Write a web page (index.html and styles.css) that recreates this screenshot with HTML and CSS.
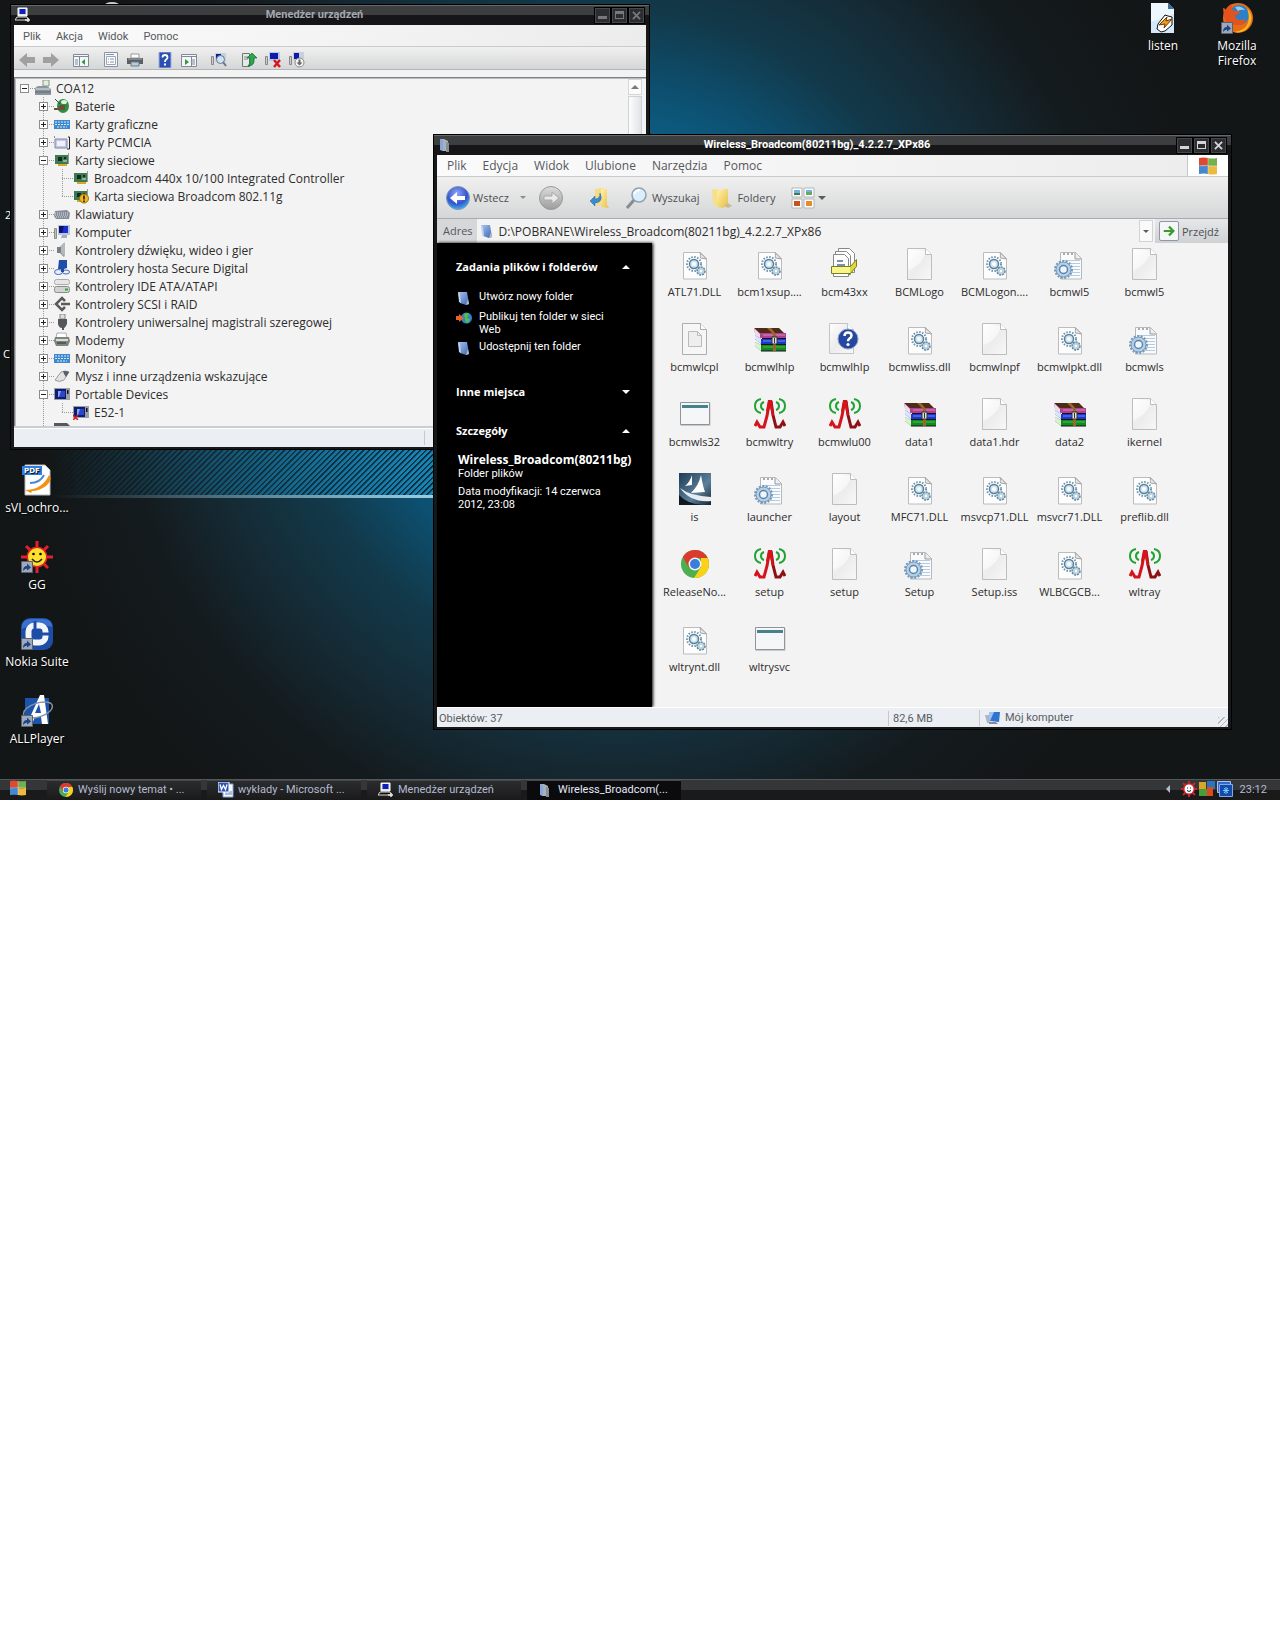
FILE: index.html
```html
<!DOCTYPE html>
<html lang="pl">
<head>
  <meta charset="UTF-8">
  <meta name="viewport" content="width=device-width, initial-scale=1.0">
  <title>Pulpit</title>
  <link rel="stylesheet" href="styles.css">
</head>
<body>

<!-- Icon sprites -->
<svg class="sprites" aria-hidden="true">
  <defs>
    <linearGradient id="gPage" x1="0" y1="0" x2="1" y2="1"><stop offset="0" stop-color="#fff"/><stop offset=".5" stop-color="#ececec"/><stop offset="1" stop-color="#f8f8f8"/></linearGradient>
    <linearGradient id="gFolder" x1="0" y1="0" x2="1" y2="1"><stop offset="0" stop-color="#fff1a8"/><stop offset="1" stop-color="#e8be4a"/></linearGradient>
    <linearGradient id="gNight" x1="0" y1="0" x2="1" y2="1"><stop offset="0" stop-color="#a9c3ee"/><stop offset="1" stop-color="#3b65b5"/></linearGradient>
    <radialGradient id="gBack" cx=".45" cy=".3" r=".75"><stop offset="0" stop-color="#8fa6f2"/><stop offset=".6" stop-color="#3453cf"/><stop offset="1" stop-color="#3fc4ef"/></radialGradient>
    <linearGradient id="gIs" x1="0" y1="0" x2="1" y2="1"><stop offset="0" stop-color="#1d3b55"/><stop offset=".6" stop-color="#5d809b"/><stop offset="1" stop-color="#16222d"/></linearGradient>
    <linearGradient id="gGray" x1="0" y1="0" x2="0" y2="1"><stop offset="0" stop-color="#dcdcdc"/><stop offset="1" stop-color="#9d9d9d"/></linearGradient>
  </defs>

  <!-- file types, 32x32 -->
  <symbol id="page" viewBox="0 0 32 32"><path d="M3.5 .5h18l6 6v25h-24z" fill="url(#gPage)" stroke="#bdbdbd"/><path d="M4 22C14 19 20 12 22 3L4 1z" fill="#fff" opacity=".5"/><path d="M21.500 .5v6h6" fill="#fff" stroke="#bdbdbd"/></symbol>
  <symbol id="dll" viewBox="0 0 32 32"><path d="M4.500 4.500h17l6 6v20.500h-23z" fill="#fdfdfd" stroke="#bcbcbc"/><path d="M21 4.500c1 2 0 4 .5 5.500l6 1z" fill="#e6e6e6" stroke="#a5a5a5"/><circle cx="15" cy="16" r="7" fill="none" stroke="#6b93ac" stroke-width="2" stroke-dasharray="1.500 1.500"/><circle cx="15" cy="16" r="4.500" fill="#cfe4f1" stroke="#557f9c" stroke-width="1.500"/><circle cx="15" cy="16" r="2" fill="#fff"/><circle cx="22" cy="23" r="4" fill="#b9d3e2" stroke="#64879c" stroke-width="1.500" stroke-dasharray="2 1"/><circle cx="22" cy="23" r="1.200" fill="#fff"/></symbol>
  <symbol id="inf" viewBox="0 0 32 32"><path d="M6.500 4.500h15l6 6v20.500h-21z" fill="#fafbfc" stroke="#b5b9bd"/><path d="M9 6h2m2 0h2m2 0h2" stroke="#aaa" stroke-width="2"/><path d="M9 12.500h17m-17 3h17m-17 3h17m-17 3h17m-17 3h17m-17 3h17" stroke="#b5cbe2"/><path d="M21 5v6h6.500" fill="#eee" stroke="#999"/><circle cx="9.500" cy="21.500" r="8.500" fill="none" stroke="#7898b5" stroke-width="2" stroke-dasharray="2 1.500"/><circle cx="9.500" cy="21.500" r="7.500" fill="#b4d0e8" stroke="#6f95b7"/><circle cx="9.500" cy="21.500" r="4" fill="#eef6fb" stroke="#5c84a8" stroke-width="1.500"/></symbol>
  <symbol id="cpl" viewBox="0 0 32 32"><path d="M3.500 .5h18l6 6v25h-24z" fill="#f6f6f6" stroke="#adadad"/><path d="M21.500 .5v6h6" fill="#fff" stroke="#adadad"/><path d="M9.500 8.500h9l4 4v11h-13z" fill="#eee" stroke="#bbb"/><path d="M18.500 8.500v4h4" fill="none" stroke="#bbb"/></symbol>
  <symbol id="stack" viewBox="0 0 32 32"><path d="M9.500 .5h11l5 5v19h-16z" fill="#fff" stroke="#888"/><path d="M6.500 3.500h11l4 4v19h-15z" fill="#fff" stroke="#888"/><path d="M4.500 6.500h11l4 4v18h-15z" fill="#fff" stroke="#888"/><path d="M8 13h6m-6 4h8" stroke="#516d94" stroke-width="1.500"/><path d="M2.500 18.500h19l6-7v7l-6 7h-19z" fill="#d9d93a" stroke="#7d7c20"/><path d="M3 19h18v6H3z" fill="#f6f68a"/></symbol>
  <symbol id="rar" viewBox="0 0 32 32"><path d="M0 5h25l7 7v3H7z" fill="#4e2a18"/><path d="M0 5l6 5h26v5H7L1 10z" fill="#b0408e"/><path d="M0 5l6 6v4L1 10z" fill="#e8e0e6"/><path d="M1 12l6 4h25v5H7l-6-5z" fill="#1c38c8"/><path d="M1 12l6 4v5l-6-5z" fill="#dfe4f8"/><path d="M1 19l6 3h25v6H7l-6-5z" fill="#128a1d"/><path d="M1 19l6 3v6l-6-5z" fill="#d9f0d5"/><path d="M8 15.500h24M7 21.500h25M7 28h25" stroke="#170f24"/><path d="M9 12h22" stroke="#d98abf"/><path d="M9 18h22" stroke="#6f8df2"/><path d="M9 24h22" stroke="#4cc24c"/><path d="M13 5h4l5 6v17h-3V11z" fill="#96682a"/><path d="M18 14h5v7h-5z" fill="#ddd" stroke="#333"/><path d="M20.500 15v5" stroke="#333"/></symbol>
  <symbol id="help" viewBox="0 0 32 32"><path d="M.5 .5h18l6 6v24h-24z" fill="url(#gPage)" stroke="#c4c4c4"/><path d="M18.500 .5v6h6" fill="#fff" stroke="#c4c4c4"/><circle cx="19" cy="16" r="10" fill="#26479f" stroke="#8b9cc9"/><path d="M15.500 13q0-3.500 3.500-3.500t3.500 3q0 2-2.200 3.200-1.300.8-1.300 2.500" fill="none" stroke="#fff" stroke-width="2.500"/><circle cx="19" cy="21.500" r="1.600" fill="#fff"/></symbol>
  <symbol id="exe" viewBox="0 0 32 32"><path d="M1.500 5h30v23h-30z" fill="#c9c9c9"/><path d="M1.500 4.500h29v22h-29z" fill="#f4f6f7" stroke="#8e9499"/><path d="M3 7h26v3H3z" fill="#47818c"/></symbol>
  <symbol id="wifi" viewBox="0 0 32 32"><path d="M17 3l2 14 3 12 4 0 3-5 2 4" fill="none" stroke="#8e1014" stroke-width="3"/><path d="M1 28l2-4 3 5h4l3-11L15.500 4" fill="none" stroke="#d4141c" stroke-width="3"/><path d="M14 2h4l2 15-2 1-2-9-2 6-2-2z" fill="#d4141c"/><path d="M7 1Q1 2 1 8t6 7M25 1q6 1 6 7t-6 7M10 4Q7 5 7 8t3 4M22 4q3 1 3 4t-3 4" fill="none" stroke="#21a233" stroke-width="2"/></symbol>
  <symbol id="sail" viewBox="0 0 32 32"><path d="M0 0h32v32H0z" fill="url(#gIs)"/><path d="M13 2v10l-7 1q5-4 7-11zM22 2q2 12 4 17l-14 1Q20 12 22 2z" fill="#fff"/><path d="M1 15q10 8 31 9v4Q12 30 1 15z" fill="#e6edf2"/><path d="M0 22q8 9 24 10H0z" fill="#101820"/></symbol>
  <symbol id="chrome" viewBox="0 0 32 32"><circle cx="16" cy="16" r="14" fill="#4caf50"/><path d="M3.900 9A14 14 0 0 1 28.600 10H16L9.500 19z" fill="#db3b2e"/><path d="M28.600 10A14 14 0 0 1 15 30l7-11 0-9z" fill="#fcd116"/><circle cx="16" cy="16" r="6.500" fill="#f3f3f3"/><circle cx="16" cy="16" r="5" fill="#3b7ddb"/></symbol>

  <!-- desktop, 32x32 -->
  <symbol id="link" viewBox="0 0 12 12"><path d="M.5 .5h11v11H.5z" fill="#9fa9bb" stroke="#5b616e"/><path d="M2 10q0-5 4-5V2.500l4 4-4 3V7.500Q4 7.500 2 10z" fill="#1b4684"/></symbol>
  <symbol id="listen" viewBox="0 0 32 32"><path d="M4 1h17l6 6v24H4z" fill="#d5e8f9"/><path d="M4 1h17v6h6v5L4 20z" fill="#eff7fe"/><path d="M21 1l6 6h-6z" fill="#3c6fa8"/><path d="M11 22l7-9 3 1 4 1v8l-7 6-4 1-4-3z" fill="#fff" stroke="#111"/><path d="M12 23l8-8-1 4 6-2-8 9 1-4z" fill="#f39a17" stroke="#6d3b00"/></symbol>
  <symbol id="firefox" viewBox="0 0 32 32"><circle cx="17" cy="16" r="15" fill="#e86c13"/><circle cx="18" cy="13" r="10" fill="#2c7fc9"/><path d="M14 5q6-2 10 3-5-1-7 1z" fill="#8ed0f2"/><path d="M2 6q2 0 3 2 2-5 6-6-1 5 2 7l6 0q0 4-5 4 0 5 5 5t5-2q1 6-6 7Q5 24 3 15z" fill="#e5531c"/><path d="M26 6q8 9 2 18-5 8-15 6 11-1 14-9 2-7-1-15z" fill="#fbb825"/></symbol>
  <symbol id="pdf" viewBox="0 0 32 32"><path d="M4 1h20l5 5v25H4z" fill="#fff" stroke="#b9b9b9"/><path d="M1 2h20v9H1z" fill="#2f7de0"/><path d="M9 19q10 0 14-8" fill="none" stroke="#4c86d6" stroke-width="2"/><path d="M4 26q17 0 24-15 4 5-3 11-7 5-14 5l-1 2z" fill="#f2920f"/></symbol>
  <symbol id="sun" viewBox="0 0 32 32"><path d="M16 0v32M0 16h32M5 5l22 22M27 5L5 27" stroke="#e1202b" stroke-width="3"/><circle cx="16" cy="16" r="10.500" fill="#e1202b"/><circle cx="16" cy="16" r="9" fill="#ffe12b"/><circle cx="12.500" cy="13" r="1.300"/><circle cx="19.500" cy="13" r="1.300"/><path d="M11 18q5 6 10 0" fill="none" stroke="#222" stroke-width="1.500"/></symbol>
  <symbol id="nokia" viewBox="0 0 32 32"><rect width="32" height="32" rx="9" fill="#1d4da6"/><path d="M1 9q0-8 9-8h12q9 0 9 8-15-6-30 2z" fill="#3a71cc"/><rect x="7.500" y="7.500" width="17" height="17" rx="6" fill="none" stroke="#f2f6fb" stroke-width="6"/><path d="M14 3v8M21 16h8" stroke="#1d4da6" stroke-width="3"/></symbol>
  <symbol id="allplayer" viewBox="0 0 32 32"><path d="M4 3h24v26H4z" fill="#1b55ab"/><path d="M19 0h4l4 29h-6l-1-7h-6l-3 7H6zm-1 9l-4 9h6z" fill="#fff"/><ellipse cx="17" cy="15" rx="15" ry="7" fill="none" stroke="#8391a3" stroke-width="1.500" transform="rotate(-18 17 15)"/></symbol>

  <!-- small icons, 16x16 -->
  <symbol id="pc" viewBox="0 0 16 16"><path d="M3 1h9v8H3z" fill="#e8e4da" stroke="#fff"/><path d="M4.500 2h6v5h-6z" fill="#0a1fc4"/><path d="M2 10h10l2 3H0z" fill="#111" stroke="#ddd"/><path d="M10 13h5m-2-2v4" stroke="#e5e5e5" stroke-width="1.500"/></symbol>
  <symbol id="nfolder" viewBox="0 0 16 16"><path d="M2 2l9 0 2 12-3 1-6-2z" fill="url(#gNight)"/><path d="M2 2l2 2 1 9-2-1z" fill="#c5d4ee"/><path d="M10 15l3-1-1-5z" fill="#b9bec6"/></symbol>
  <symbol id="gfolder" viewBox="0 0 16 16"><path d="M2 2l4 0 4 2v10H4z" fill="#a8b0b8"/><path d="M2 2l3 1v11l-3-1z" fill="#86a5dc"/><path d="M8 5l3 1v9H8z" fill="#858f98"/></symbol>
  <symbol id="arrl" viewBox="0 0 16 16"><path d="M0 8l8-7v4h8v6H8v4z" fill="#a0a0a0"/></symbol>
  <symbol id="arrr" viewBox="0 0 16 16"><path d="M16 8L8 1v4H0v6h8v4z" fill="#a0a0a0"/></symbol>
  <symbol id="pane-l" viewBox="0 0 16 16"><path d="M.5 2.500h15v12H.5z" fill="#f3f6fa" stroke="#818b98"/><path d="M1 4.500h14M6.500 5v9M2 8h3m-3 2h3m-3 2h3" stroke="#818b98"/><path d="M12 7v6L8.500 10z" fill="#37963a"/></symbol>
  <symbol id="pane-r" viewBox="0 0 16 16"><path d="M.5 2.500h15v12H.5z" fill="#f3f6fa" stroke="#818b98"/><path d="M1 4.500h14M10.500 5v9M11 8h3m-3 2h3m-3 2h3" stroke="#818b98"/><path d="M4 7v6l4-3z" fill="#37963a"/></symbol>
  <symbol id="props" viewBox="0 0 16 16"><path d="M1.500 .5h13v14h-13z" fill="#f6f8fb" stroke="#8a94a2"/><path d="M3.500 4.500h9v8h-9z" fill="#fff" stroke="#9aa6b6"/><path d="M5 7h1m1 0h4m-6 3h1m1 0h4M3 2.500h8" stroke="#8295aa"/></symbol>
  <symbol id="printer" viewBox="0 0 16 16"><path d="M4 2h8v4H4z" fill="#fff" stroke="#999"/><path d="M0 6h16v6H0z" fill="#5b5e63"/><path d="M1 7h14" stroke="#aaa"/><path d="M4 10h8v4H4z" fill="#a7d3ec" stroke="#777"/></symbol>
  <symbol id="hlp" viewBox="0 0 16 16"><path d="M2 0h12v16H2z" fill="#2c4fb0" stroke="#9db1de"/><path d="M5.500 5.500q0-2.500 2.500-2.500t2.500 2.500q0 1.300-1.300 2.100T8 10" fill="none" stroke="#fff" stroke-width="1.800"/><path d="M7 11.500h2v2H7z" fill="#fff"/></symbol>
  <symbol id="scan" viewBox="0 0 16 16"><path d="M.5 4.500h2v8h-2z" fill="#c9cdd2" stroke="#888"/><path d="M4 1h11v9H4z" fill="#c7cfdb"/><path d="M5 2h5v5H5z" fill="#0b1cab"/><circle cx="9.500" cy="7.500" r="4" fill="#cfe3f6" stroke="#66788c"/><path d="M12 10l3 4" stroke="#66788c" stroke-width="2"/></symbol>
  <symbol id="upd" viewBox="0 0 16 16"><path d="M1.500 1.500h7v13h-7z" fill="#e5e9e6" stroke="#6c7b71"/><path d="M3 5h4M3 7h4" stroke="#888"/><path d="M11 1l5 5h-3q1 8-6 8 3-2 2-8H6z" fill="#2aa84e" stroke="#14632b" stroke-width=".7"/></symbol>
  <symbol id="unin" viewBox="0 0 16 16"><path d="M.5 4.500h2v8h-2z" fill="#c9cdd2" stroke="#888"/><path d="M4 0h11v9H4z" fill="#b8c8e6"/><path d="M5 1h8v6H5z" fill="#0b1cab"/><path d="M9 8l6 7m0-7l-6 7" stroke="#d41820" stroke-width="2.500"/></symbol>
  <symbol id="dis" viewBox="0 0 16 16"><path d="M.5 4.500h2v8h-2z" fill="#c9cdd2" stroke="#888"/><path d="M4 0h11v9H4z" fill="#c9d0da"/><path d="M5 1h5v6H5z" fill="#0b1cab"/><circle cx="10.500" cy="10.500" r="4.500" fill="#f6f6f6" stroke="#888"/><path d="M9.500 7.500h2v3h2l-3 3-3-3h2z" fill="#666"/></symbol>

  <symbol id="root" viewBox="0 0 16 16"><path d="M8 0h6v6H8z" fill="#e4ebe0" stroke="#87967f"/><path d="M0 9q1-3 4-3h8l4 3v6H0z" fill="#8b969c"/><path d="M1 9h14" stroke="#dfe5e8"/><path d="M0 12h16" stroke="#5d686e"/></symbol>
  <symbol id="batt" viewBox="0 0 16 16"><ellipse cx="9" cy="8" rx="6" ry="7" fill="#2d8f43"/><ellipse cx="10" cy="4" rx="3" ry="2" fill="#dff2df"/><path d="M1 1l5 5" stroke="#444"/><path d="M0 10h4l2-3h5v5H6l-2 0H0z" fill="#6b5038"/></symbol>
  <symbol id="kb" viewBox="0 0 16 16"><path d="M0 4h16v9H0z" fill="#3e88cc"/><path d="M1 6h14M1 8.500h14M3 11h10" stroke="#d5e9fa" stroke-dasharray="2 1"/></symbol>
  <symbol id="pcmcia" viewBox="0 0 16 16"><path d="M1 5h12v9H1z" fill="#c5c9e2" stroke="#8187aa"/><path d="M3 7h8v5H3z" fill="#eef0fa"/><path d="M0 3h1m13 0h1.500v12H13" fill="none" stroke="#222"/></symbol>
  <symbol id="card" viewBox="0 0 16 16"><path d="M1 3h13v9H1z" fill="#3d7a54"/><path d="M4 5h4v4H4zM10 5h2v2h-2z" fill="#152a1c"/><path d="M9 8h4v2H9z" fill="#8ab695"/><path d="M4 12h9v2H4z" fill="#d6a626"/><path d="M14.500 1v11" stroke="#999"/></symbol>
  <symbol id="cardw" viewBox="0 0 16 16"><use href="#card"/><circle cx="11" cy="10.500" r="4.500" fill="#f0b81c" stroke="#96690b"/><path d="M11 7.500v4m0 1v1.500" stroke="#111" stroke-width="1.500"/></symbol>
  <symbol id="keys" viewBox="0 0 16 16"><path d="M1 5l12-1 3 3-1 6H2l-2-3z" fill="#858c99"/><path d="M1 7h13M1 9h14M2 11h12" stroke="#dce0e8" stroke-dasharray="1 1"/></symbol>
  <symbol id="comp" viewBox="0 0 16 16"><path d="M.5 4.500h2v10h-2z" fill="#b9c0b8" stroke="#89918a"/><path d="M4 1h12v10H4z" fill="#b8c5e0"/><path d="M5 2h9v7H5z" fill="#1a2fc9"/><path d="M5 2h5L8 9H5z" fill="#0a1270"/><path d="M8 11h5v3H7z" fill="#aab"/></symbol>
  <symbol id="sound" viewBox="0 0 16 16"><path d="M3 5h3l4-4v14l-4-4H3z" fill="#7a7f83"/><path d="M7 4l4-4v15L7 11z" fill="#b5b9bc"/></symbol>
  <symbol id="sd" viewBox="0 0 16 16"><ellipse cx="4.500" cy="12" rx="4" ry="2.500" fill="#eef" stroke="#3b68bb"/><ellipse cx="12" cy="12" rx="3.500" ry="2" fill="#eef" stroke="#3b68bb"/><path d="M5 0h8v8l-3 1v3H7V9H4z" fill="#1f4da8"/></symbol>
  <symbol id="ide" viewBox="0 0 16 16"><rect x=".5" y="1.500" width="15" height="5" rx="2" fill="#e6e6e6" stroke="#aaa"/><rect x=".5" y="8.500" width="15" height="6" rx="2" fill="#d0d3d0" stroke="#8b8b8b"/><path d="M11 11.500h3" stroke="#3aa03a" stroke-width="2"/></symbol>
  <symbol id="scsi" viewBox="0 0 16 16"><path d="M11 5L8 2 2 8l6 6 3-3M7 8h9" fill="none" stroke="#5a5a5a" stroke-width="2.500"/></symbol>
  <symbol id="usb" viewBox="0 0 16 16"><path d="M6 0h5v5H6z" fill="#ddd" stroke="#888"/><path d="M4 5h9v5q-2 4-3 4v2H8v-2q-3 0-4-4z" fill="#55585b"/></symbol>
  <symbol id="modem" viewBox="0 0 16 16"><path d="M3 1h9l1 5H2z" fill="#fff" stroke="#aaa"/><path d="M1 5h14l1 4-2 5H2l-2-5z" fill="#7d857e"/><path d="M2 8h12" stroke="#d5ddd5" stroke-width="2"/><path d="M3 11h9" stroke="#333"/></symbol>
  <symbol id="mouse" viewBox="0 0 16 16"><path d="M1 12l6-8q5-2 8 0l-5 8q-5 3-9 0z" fill="#e0e2e4" stroke="#9a9da0"/><path d="M9 3q5 0 6 1l-3 5-2-3z" fill="#55606a"/></symbol>
  <symbol id="port" viewBox="0 0 16 16"><path d="M0 2h16v12H0z" fill="#9aa0a8"/><path d="M1 3h11v10H1z" fill="#101d6e"/><path d="M4 5h7v6H4z" fill="#2846d0"/><path d="M4 5h3l-2 6H4z" fill="#8aa2f0"/><path d="M13 4h1.500v4H13z" fill="#111"/></symbol>
  <symbol id="portx" viewBox="0 0 16 16"><use href="#port"/><path d="M0 11l5 5m0-5l-5 5" stroke="#d41820" stroke-width="1.500"/></symbol>
  <symbol id="chip" viewBox="0 0 16 16"><path d="M0 1h13l3 3v11H0z" fill="#55595c"/></symbol>

  <!-- explorer toolbar -->
  <symbol id="back" viewBox="0 0 24 24"><circle cx="12" cy="12" r="11.500" fill="url(#gBack)" stroke="#7c98b6"/><path d="M4 12l7-6v4h8v4h-8v4z" fill="#fff"/></symbol>
  <symbol id="fwd" viewBox="0 0 24 24"><circle cx="12" cy="12" r="11.500" fill="url(#gGray)" stroke="#9a9a9a"/><path d="M20 12l-7-6v4H5v4h8v4z" fill="#e9e9e9" stroke="#aaa"/></symbol>
  <symbol id="up" viewBox="0 0 24 24"><path d="M6 3l8-1v17l-4 1-4-3z" fill="#f7dc80"/><path d="M12 3l6 0v16l2 3-8-1z" fill="url(#gFolder)"/><path d="M1 15l5-5v3q5 0 5-6 4 9-5 10v3z" fill="#3b8bd0" stroke="#2468a5" stroke-width=".5"/></symbol>
  <symbol id="find" viewBox="0 0 24 24"><path d="M9 14L2 22" stroke="#868b90" stroke-width="3"/><circle cx="14" cy="9" r="7" fill="#dbeefb" stroke="#8fa1b0" stroke-width="1.500"/><path d="M9 8q2-4 6-4" fill="none" stroke="#fff" stroke-width="2"/></symbol>
  <symbol id="dirs" viewBox="0 0 24 24"><path d="M2 3l8 1v18l-7-4z" fill="#f7e08a"/><path d="M7 5l5-1V3h6v15l-5 4-6-1z" fill="url(#gFolder)"/><path d="M14 20l4-3 4 3-4 2z" fill="#c9bb8c"/></symbol>
  <symbol id="views" viewBox="0 0 24 24"><path d="M1 2h10v9H1zM13 2h10v9H13zM1 13h10v9H1zM13 13h10v9H13z" fill="#fff" stroke="#b5b5b5"/><path d="M3 4h6v3H3z" fill="#6db4e4"/><path d="M3 7h6v2H3z" fill="#3b7b4a"/><path d="M15 4h6v5H15z" fill="#62a86b"/><path d="M15 4h6v2H15z" fill="#6db4e4"/><path d="M3 15h6v5H3z" fill="#c9531b"/><path d="M15 15h6v5H15z" fill="#e58a2e"/></symbol>
  <symbol id="go" viewBox="0 0 16 16"><path d="M2 8h10M8 3l5 5-5 5" fill="none" stroke="#3a9a2c" stroke-width="2.500"/></symbol>
  <symbol id="flag" viewBox="0 0 18 18"><path d="M0 1q4-1 9 0v8q-4-1-9 0z" fill="#dd4a31"/><path d="M9 1q4 1 9 0v8q-5 1-9 0z" fill="#74b04e"/><path d="M0 9q4-1 9 0v8q-4-1-9 0z" fill="#4688cf"/><path d="M9 9q4 1 9 0v8q-5 1-9 0z" fill="#f0b93e"/><path d="M9 1v16M0 9q9-1 18 0" fill="none" stroke="#fff" stroke-width=".7" opacity=".5"/></symbol>
  <symbol id="globe" viewBox="0 0 16 16"><circle cx="10.500" cy="8" r="5.500" fill="#2a86c8"/><path d="M8 4q4-2 5 0l-2 4 3 1-2 4q-3 0-3-4z" fill="#5cba4a"/><path d="M0 6h3V4l5 4-5 4v-2H0z" fill="#e8632a"/></symbol>
  <symbol id="mycomp" viewBox="0 0 16 16"><path d="M4 2l11 0-1 10-9-1z" fill="#2f74d2"/><path d="M4 2l5 0L5 11l-1 0z" fill="#9fc2f1"/><path d="M0 5h4l1 8H2z" fill="#aab6c6"/><path d="M4 12h7l2 2H4z" fill="#889"/></symbol>
  <symbol id="word" viewBox="0 0 16 16"><path d="M5 2h10v13H5z" fill="#f4f7fd" stroke="#87a2d4"/><path d="M7 10h7m-7 2h7" stroke="#5d7fc0"/><path d="M0 0h11v10H0z" fill="#2a56b0" stroke="#fff"/><path d="M2 2.500l1.500 5 2-4 2 4 1.500-5" fill="none" stroke="#fff" stroke-width="1.300"/></symbol>
  <symbol id="tsun" viewBox="0 0 16 16"><path d="M8 0v16M0 8h16M2 2l12 12M14 2L2 14" stroke="#c9242c" stroke-width="2"/><circle cx="8" cy="8" r="6" fill="#c9242c"/><circle cx="8" cy="8" r="4.500" fill="#fff"/><path d="M6 7h1m2 0h1M6 9.500q2 2 4 0" fill="none" stroke="#222"/></symbol>
  <symbol id="tblocks" viewBox="0 0 16 16"><path d="M0 1h7v7H0z" fill="#d8a72a"/><path d="M8 0h8v8H8z" fill="#2676c2"/><path d="M0 8h8v7H0z" fill="#4a9b3c"/><path d="M8 6h6v9H8z" fill="#dd4a1e"/></symbol>
  <symbol id="tnet" viewBox="0 0 16 16"><path d="M.5 .5h13v11H.5z" fill="#3468cf" stroke="#a9c4f2"/><path d="M2.500 3.500h13v12h-13z" fill="#124aa8" stroke="#7fa8ea"/><path d="M9 6v7M6 9.500h6M7 7l4 5m0-5l-4 5" stroke="#7fc4ff"/></symbol>
</svg>

<div class="desktop">
  <div class="workspace">
    <div class="band"></div>
    <div class="peek"></div>
    <span class="stray stray-a">2</span>
    <span class="stray stray-b">C</span>

    <!-- Shortcuts on the wallpaper -->
    <nav class="shortcuts left">
      <a href="#"><svg><use href="#pdf"/><text x="3" y="9" class="pdf-text">PDF</text></svg>sVI_ochro...</a>
      <a href="#"><svg><use href="#sun"/><use href="#link" y="20" width="12" height="12"/></svg>GG</a>
      <a href="#"><svg><use href="#nokia"/><use href="#link" y="20" width="12" height="12"/></svg>Nokia Suite</a>
      <a href="#"><svg><use href="#allplayer"/><use href="#link" y="20" width="12" height="12"/></svg>ALLPlayer</a>
    </nav>
    <nav class="shortcuts right">
      <a href="#"><svg><use href="#listen"/></svg>listen</a>
      <a href="#"><svg><use href="#firefox"/><use href="#link" y="20" width="12" height="12"/></svg>Mozilla Firefox</a>
    </nav>

    <!-- Device manager -->
    <section class="window devices">
      <header class="titlebar">
        <svg class="ico"><use href="#pc"/></svg>
        <h2>Menedżer urządzeń</h2>
        <div class="controls">
          <button aria-label="Minimalizuj"><i class="min"></i></button>
          <button aria-label="Maksymalizuj"><i class="max"></i></button>
          <button aria-label="Zamknij"><svg viewBox="0 0 10 10"><path d="M1 1l8 8M9 1L1 9"/></svg></button>
        </div>
      </header>
      <div class="menubar">
        <button>Plik</button><button>Akcja</button><button>Widok</button><button>Pomoc</button>
      </div>
      <div class="toolbar">
        <button aria-label="Wstecz"><svg class="ico"><use href="#arrl"/></svg></button>
        <button aria-label="Dalej"><svg class="ico"><use href="#arrr"/></svg></button>
        <button class="split" aria-label="Drzewo konsoli"><svg class="ico"><use href="#pane-l"/></svg></button>
        <button class="split" aria-label="Właściwości"><svg class="ico"><use href="#props"/></svg></button>
        <button aria-label="Drukuj"><svg class="ico"><use href="#printer"/></svg></button>
        <button class="split" aria-label="Pomoc"><svg class="ico"><use href="#hlp"/></svg></button>
        <button aria-label="Okienko akcji"><svg class="ico"><use href="#pane-r"/></svg></button>
        <button class="split" aria-label="Skanuj"><svg class="ico"><use href="#scan"/></svg></button>
        <button class="split" aria-label="Aktualizuj"><svg class="ico"><use href="#upd"/></svg></button>
        <button aria-label="Odinstaluj"><svg class="ico"><use href="#unin"/></svg></button>
        <button aria-label="Wyłącz"><svg class="ico"><use href="#dis"/></svg></button>
      </div>
      <div class="tree-pane">
        <ul class="tree">
          <li>
            <div class="row"><i class="box open"></i><svg class="ico"><use href="#root"/></svg>COA12</div>
            <ul class="branch">
              <li class="row"><i class="box"></i><svg class="ico"><use href="#batt"/></svg>Baterie</li>
              <li class="row"><i class="box"></i><svg class="ico"><use href="#kb"/></svg>Karty graficzne</li>
              <li class="row"><i class="box"></i><svg class="ico"><use href="#pcmcia"/></svg>Karty PCMCIA</li>
              <li>
                <div class="row"><i class="box open"></i><svg class="ico"><use href="#card"/></svg>Karty sieciowe</div>
                <ul class="leaves">
                  <li class="row"><i class="twig"></i><svg class="ico"><use href="#card"/></svg>Broadcom 440x 10/100 Integrated Controller</li>
                  <li class="row"><i class="twig"></i><svg class="ico"><use href="#cardw"/></svg>Karta sieciowa Broadcom 802.11g</li>
                </ul>
              </li>
              <li class="row"><i class="box"></i><svg class="ico"><use href="#keys"/></svg>Klawiatury</li>
              <li class="row"><i class="box"></i><svg class="ico"><use href="#comp"/></svg>Komputer</li>
              <li class="row"><i class="box"></i><svg class="ico"><use href="#sound"/></svg>Kontrolery dźwięku, wideo i gier</li>
              <li class="row"><i class="box"></i><svg class="ico"><use href="#sd"/></svg>Kontrolery hosta Secure Digital</li>
              <li class="row"><i class="box"></i><svg class="ico"><use href="#ide"/></svg>Kontrolery IDE ATA/ATAPI</li>
              <li class="row"><i class="box"></i><svg class="ico"><use href="#scsi"/></svg>Kontrolery SCSI i RAID</li>
              <li class="row"><i class="box"></i><svg class="ico"><use href="#usb"/></svg>Kontrolery uniwersalnej magistrali szeregowej</li>
              <li class="row"><i class="box"></i><svg class="ico"><use href="#modem"/></svg>Modemy</li>
              <li class="row"><i class="box"></i><svg class="ico"><use href="#kb"/></svg>Monitory</li>
              <li class="row"><i class="box"></i><svg class="ico"><use href="#mouse"/></svg>Mysz i inne urządzenia wskazujące</li>
              <li>
                <div class="row"><i class="box open"></i><svg class="ico"><use href="#port"/></svg>Portable Devices</div>
                <ul class="leaves">
                  <li class="row"><i class="twig"></i><svg class="ico"><use href="#portx"/></svg>E52-1</li>
                </ul>
              </li>
              <li class="row"><i class="gap"></i><svg class="ico"><use href="#chip"/></svg></li>
            </ul>
          </li>
        </ul>
        <div class="scrollbar"><button aria-label="W górę"><i class="tri up"></i></button><i class="thumb"></i></div>
      </div>
      <footer class="statusbar"><span></span></footer>
    </section>

    <!-- Explorer -->
    <section class="window explorer">
      <header class="titlebar">
        <svg class="ico"><use href="#gfolder"/></svg>
        <h2>Wireless_Broadcom(80211bg)_4.2.2.7_XPx86</h2>
        <div class="controls">
          <button aria-label="Minimalizuj"><i class="min"></i></button>
          <button aria-label="Maksymalizuj"><i class="max"></i></button>
          <button aria-label="Zamknij"><svg viewBox="0 0 10 10"><path d="M1 1l8 8M9 1L1 9"/></svg></button>
        </div>
      </header>
      <div class="menubar">
        <button>Plik</button><button>Edycja</button><button>Widok</button><button>Ulubione</button><button>Narzędzia</button><button>Pomoc</button>
        <span class="throbber"><svg><use href="#flag"/></svg></span>
      </div>
      <div class="toolbar">
        <button class="nav-back"><svg><use href="#back"/></svg>Wstecz<i class="tri down"></i></button>
        <button class="nav-fwd" aria-label="Dalej"><svg><use href="#fwd"/></svg></button>
        <button class="nav-up" aria-label="W górę"><svg><use href="#up"/></svg></button>
        <button class="nav-find"><svg><use href="#find"/></svg>Wyszukaj</button>
        <button class="nav-dirs"><svg><use href="#dirs"/></svg>Foldery</button>
        <button class="nav-views" aria-label="Widoki"><svg><use href="#views"/></svg><i class="tri down dark"></i></button>
      </div>
      <div class="address">
        <label for="path">Adres</label>
        <svg class="ico"><use href="#nfolder"/></svg>
        <input id="path" type="text" value="D:\POBRANE\Wireless_Broadcom(80211bg)_4.2.2.7_XPx86">
        <button class="drop" aria-label="Rozwiń"><i class="tri down dark"></i></button>
        <button class="go"><span><svg><use href="#go"/></svg></span>Przejdź</button>
      </div>
      <div class="body">
        <aside class="tasks">
          <h3>Zadania plików i folderów <i class="tri up"></i></h3>
          <ul>
            <li><svg class="ico"><use href="#nfolder"/></svg><a href="#">Utwórz nowy folder</a></li>
            <li><svg class="ico"><use href="#globe"/></svg><a href="#">Publikuj ten folder w sieci Web</a></li>
            <li><svg class="ico"><use href="#nfolder"/></svg><a href="#">Udostępnij ten folder</a></li>
          </ul>
          <h3 class="places">Inne miejsca <i class="tri down"></i></h3>
          <h3>Szczegóły <i class="tri up"></i></h3>
          <div class="details">
            <strong>Wireless_Broadcom(80211bg)</strong>
            <p>Folder plików</p>
            <p>Data modyfikacji: 14 czerwca 2012, 23:08</p>
          </div>
        </aside>
        <div class="files">
          <button><svg><use href="#dll"/></svg>ATL71.DLL</button>
          <button><svg><use href="#dll"/></svg>bcm1xsup....</button>
          <button><svg><use href="#stack"/></svg>bcm43xx</button>
          <button><svg><use href="#page"/></svg>BCMLogo</button>
          <button><svg><use href="#dll"/></svg>BCMLogon....</button>
          <button><svg><use href="#inf"/></svg>bcmwl5</button>
          <button><svg><use href="#page"/></svg>bcmwl5</button>
          <button><svg><use href="#cpl"/></svg>bcmwlcpl</button>
          <button><svg><use href="#rar"/></svg>bcmwlhlp</button>
          <button><svg><use href="#help"/></svg>bcmwlhlp</button>
          <button><svg><use href="#dll"/></svg>bcmwliss.dll</button>
          <button><svg><use href="#page"/></svg>bcmwlnpf</button>
          <button><svg><use href="#dll"/></svg>bcmwlpkt.dll</button>
          <button><svg><use href="#inf"/></svg>bcmwls</button>
          <button><svg><use href="#exe"/></svg>bcmwls32</button>
          <button><svg><use href="#wifi"/></svg>bcmwltry</button>
          <button><svg><use href="#wifi"/></svg>bcmwlu00</button>
          <button><svg><use href="#rar"/></svg>data1</button>
          <button><svg><use href="#page"/></svg>data1.hdr</button>
          <button><svg><use href="#rar"/></svg>data2</button>
          <button><svg><use href="#page"/></svg>ikernel</button>
          <button><svg><use href="#sail"/></svg>is</button>
          <button><svg><use href="#inf"/></svg>launcher</button>
          <button><svg><use href="#page"/></svg>layout</button>
          <button><svg><use href="#dll"/></svg>MFC71.DLL</button>
          <button><svg><use href="#dll"/></svg>msvcp71.DLL</button>
          <button><svg><use href="#dll"/></svg>msvcr71.DLL</button>
          <button><svg><use href="#dll"/></svg>preflib.dll</button>
          <button><svg><use href="#chrome"/></svg>ReleaseNo...</button>
          <button><svg><use href="#wifi"/></svg>setup</button>
          <button><svg><use href="#page"/></svg>setup</button>
          <button><svg><use href="#inf"/></svg>Setup</button>
          <button><svg><use href="#page"/></svg>Setup.iss</button>
          <button><svg><use href="#dll"/></svg>WLBCGCB...</button>
          <button><svg><use href="#wifi"/></svg>wltray</button>
          <button><svg><use href="#dll"/></svg>wltrynt.dll</button>
          <button><svg><use href="#exe"/></svg>wltrysvc</button>
        </div>
      </div>
      <footer class="statusbar">
        <span class="count">Obiektów: 37</span>
        <span class="size">82,6 MB</span>
        <span class="zone"><svg class="ico"><use href="#mycomp"/></svg>Mój komputer</span>
      </footer>
    </section>
  </div>

  <!-- Taskbar -->
  <footer class="taskbar">
    <button class="start" aria-label="Start"><svg class="ico"><use href="#flag"/></svg></button>
    <button class="task"><svg class="ico"><use href="#chrome"/></svg>Wyślij nowy temat • ...</button>
    <button class="task"><svg class="ico"><use href="#word"/></svg>wykłady - Microsoft ...</button>
    <button class="task"><svg class="ico"><use href="#pc"/></svg>Menedżer urządzeń</button>
    <button class="task active"><svg class="ico"><use href="#gfolder"/></svg>Wireless_Broadcom(...</button>
    <div class="tray">
      <i class="tri left"></i>
      <svg class="ico"><use href="#tsun"/></svg>
      <svg class="ico"><use href="#tblocks"/></svg>
      <svg class="ico"><use href="#tnet"/></svg>
      <time>23:12</time>
    </div>
  </footer>
</div>

</body>
</html>
```
FILE: styles.css
```css
* {
  box-sizing: border-box;
}

body {
  margin: 0;
  background: #fff;
  font: 11px/15px "Open Sans", "Noto Sans", sans-serif;
  color: #2c2c2c;
}

button {
  margin: 0;
  padding: 0;
  border: 0;
  background: none;
  font: inherit;
  color: inherit;
}

a {
  color: inherit;
  text-decoration: none;
}

ul {
  margin: 0;
  padding: 0;
  list-style: none;
}

h2, h3, p {
  margin: 0;
}

.sprites {
  position: absolute;
  width: 0;
  height: 0;
}

.ico {
  flex: none;
  width: 16px;
  height: 16px;
}

.pdf-text {
  font: bold 7px "DejaVu Sans", sans-serif;
  fill: #fff;
}

/* Small triangles */
.tri {
  flex: none;
  width: 0;
  height: 0;
  border: 4px solid transparent;
}
.tri.up { border-top: 0; border-bottom-color: currentColor; }
.tri.down { border-bottom: 0; border-top-color: currentColor; }
.tri.left { border-left: 0; border-right-color: currentColor; }

/* Desktop */
.desktop {
  display: flex;
  flex-direction: column;
  min-height: 800px;
  background: radial-gradient(circle at 48% 340px, #0f7fb5 0, #0c5b80 210px, #0d4f6f 255px, #12394a 330px, #152a34 420px, #141b1e 500px, #131617 600px);
}

.workspace {
  position: relative;
  flex: 1;
  overflow: hidden;
}

.band {
  position: absolute;
  top: 400px;
  left: 0;
  right: 0;
  height: 98px;
  border-bottom: 3px solid #9fd0e2;
  background: repeating-linear-gradient(135deg, #0c2a38 0 1px, #1787b8 2px 4px);
  -webkit-mask-image: linear-gradient(90deg, transparent 50px, #000 440px, #000 60%, transparent 90%);
  mask-image: linear-gradient(90deg, transparent 50px, #000 440px, #000 60%, transparent 90%);
}

.peek {
  position: absolute;
  top: 2px;
  left: 104px;
  width: 16px;
  height: 8px;
  border-radius: 50%;
  background: #c9cdd0;
}

.stray {
  position: absolute;
  color: #fff;
}
.stray-a { top: 207px; left: 5px; }
.stray-b { top: 346px; left: 3px; }

.shortcuts {
  position: absolute;
  display: flex;
  font-size: 12px;
}
.shortcuts.left {
  top: 464px;
  left: 0;
  flex-direction: column;
}
.shortcuts.right {
  top: 2px;
  right: 6px;
}
.shortcuts a {
  display: flex;
  flex-direction: column;
  align-items: center;
  width: 74px;
  min-height: 77px;
  color: #fff;
  text-align: center;
  text-shadow: 1px 1px 1px #000;
}
.shortcuts svg {
  width: 32px;
  height: 32px;
  margin-bottom: 4px;
}

/* Windows */
.window {
  position: absolute;
  display: flex;
  flex-direction: column;
  padding: 0 3px 2px;
  border: 1px solid #000;
  background: #18191b;
}
.window.devices {
  top: 4px;
  left: 10px;
  width: 50%;
}
.window.explorer {
  top: 134px;
  left: 433px;
  right: 48px;
}

.titlebar {
  display: flex;
  align-items: center;
  height: 20px;
  margin: 0 -3px;
  padding: 0 4px 1px;
  border-top: 1px solid #66696b;
  background: linear-gradient(#3d3e40 0 9px, #161618 9px);
}
.titlebar h2 {
  flex: 1;
  padding-left: 4px;
  font: bold 11px/16px Roboto, sans-serif;
  text-align: center;
  color: #fff;
}
.devices .titlebar h2 {
  color: #a3a9b1;
}

.controls {
  display: flex;
}
.controls button {
  display: flex;
  align-items: center;
  justify-content: center;
  width: 17px;
  height: 17px;
  border: 1px solid #000;
  background: #2c2d30;
  box-shadow: inset 0 0 0 1px #45474a;
  color: #d3d5d8;
}
.devices .controls button {
  color: #77797c;
}
.controls svg {
  width: 9px;
  height: 9px;
  fill: none;
  stroke: currentColor;
  stroke-width: 2;
}
.min {
  width: 9px;
  height: 3px;
  margin-top: 4px;
  background: currentColor;
}
.max {
  width: 9px;
  height: 8px;
  border: 1px solid currentColor;
  border-top-width: 3px;
}

.menubar {
  display: flex;
  align-items: center;
  height: 22px;
  border-bottom: 1px solid #c9cacb;
  background: linear-gradient(90deg, #fbfbfb, #ececec);
  color: #55585c;
}

.toolbar {
  display: flex;
  align-items: center;
  background: linear-gradient(#f0f0f0, #d5d6d7);
}

.statusbar {
  display: flex;
  align-items: center;
  height: 20px;
  border-top: 1px solid #fff;
  background: #ebeef3;
  font-family: Roboto, sans-serif;
  color: #5a5d62;
}

/* Device manager */
.devices .menubar {
  gap: 15px;
  padding: 1px 0 0 9px;
  font-family: Roboto, sans-serif;
}
.devices .toolbar {
  gap: 8px;
  height: 23px;
  padding: 3px 0 0 5px;
  border-bottom: 1px solid #b4b5b7;
}
.devices .toolbar button {
  display: flex;
}
.devices .toolbar .split {
  margin-left: 6px;
}

.tree-pane {
  display: flex;
  justify-content: space-between;
  height: 356px;
  padding: 2px 4px 0 6px;
  border-top: 7px solid #f3f3f3;
  background: #f3f3f3;
  box-shadow: inset 1px 1px #7e8184, inset 2px 2px #b9bbbd;
  font-size: 12px;
  overflow: hidden;
}
.row {
  display: flex;
  align-items: center;
  height: 18px;
  white-space: nowrap;
}
.row .ico {
  margin-right: 5px;
}
.branch,
.leaves {
  margin-left: 19px;
}
.branch {
  background: linear-gradient(#999 50%, transparent 50%) 4px 0 / 1px 2px repeat-y;
}

/* plus / minus box with its dotted stub */
.box {
  flex: none;
  width: 15px;
  height: 9px;
  background:
    linear-gradient(#222, #222) 2px 4px / 5px 1px no-repeat,
    linear-gradient(#222, #222) 4px 2px / 1px 5px no-repeat,
    linear-gradient(#8d8d8d, #8d8d8d) 0 0 / 9px 1px no-repeat,
    linear-gradient(#8d8d8d, #8d8d8d) 0 8px / 9px 1px no-repeat,
    linear-gradient(#8d8d8d, #8d8d8d) 0 0 / 1px 9px no-repeat,
    linear-gradient(#8d8d8d, #8d8d8d) 8px 0 / 1px 9px no-repeat,
    linear-gradient(#fff, #fff) 0 0 / 9px 9px no-repeat,
    linear-gradient(90deg, #999 50%, transparent 50%) 0 4px / 2px 1px repeat-x;
}
.box.open {
  background:
    linear-gradient(#222, #222) 2px 4px / 5px 1px no-repeat,
    linear-gradient(#8d8d8d, #8d8d8d) 0 0 / 9px 1px no-repeat,
    linear-gradient(#8d8d8d, #8d8d8d) 0 8px / 9px 1px no-repeat,
    linear-gradient(#8d8d8d, #8d8d8d) 0 0 / 1px 9px no-repeat,
    linear-gradient(#8d8d8d, #8d8d8d) 8px 0 / 1px 9px no-repeat,
    linear-gradient(#fff, #fff) 0 0 / 9px 9px no-repeat,
    linear-gradient(90deg, #999 50%, transparent 50%) 0 4px / 2px 1px repeat-x;
}
.twig {
  align-self: flex-start;
  width: 11px;
  height: 18px;
  margin-left: 4px;
  background:
    linear-gradient(#999 50%, transparent 50%) 0 0 / 1px 2px repeat-y,
    linear-gradient(90deg, #999 50%, transparent 50%) 0 9px / 2px 1px repeat-x;
}
.row:last-child .twig {
  height: 10px;
}
.gap {
  width: 15px;
}

.scrollbar {
  display: flex;
  flex-direction: column;
  gap: 1px;
  width: 14px;
  color: #77797c;
}
.scrollbar button {
  display: flex;
  align-items: center;
  justify-content: center;
  height: 16px;
  border: 1px solid #d5d6d7;
  background: #fbfbfb;
}
.scrollbar .thumb {
  flex: 1;
  border: 1px solid #cfd2d4;
  background: linear-gradient(90deg, #fdfdfd, #e0e3e6);
}
.devices .statusbar {
  height: 21px;
  border-top: 2px solid #c9cdd4;
  box-shadow: inset 0 1px #fff;
}
.devices .statusbar span {
  width: 100%;
  height: 14px;
  margin-right: 221px;
  border-right: 1px solid #c5c8cd;
}

/* Explorer */
.explorer .menubar {
  gap: 16px;
  padding-left: 10px;
  font-size: 12px;
}
.throbber {
  display: flex;
  align-items: center;
  justify-content: center;
  align-self: stretch;
  width: 41px;
  margin-left: auto;
  border-left: 1px solid #c2c8d2;
  background: #fff;
}
.throbber svg {
  width: 18px;
  height: 18px;
}

.explorer .toolbar {
  height: 42px;
  padding-left: 9px;
  border-bottom: 1px solid #a9abad;
  color: #4d5054;
}
.explorer .toolbar button {
  display: flex;
  align-items: center;
  gap: 3px;
}
.explorer .toolbar svg {
  width: 24px;
  height: 24px;
}
.nav-back .tri {
  margin-left: 8px;
  border-width: 3px;
  border-bottom: 0;
  color: #8b8d90;
}
.explorer .toolbar .nav-fwd { margin-left: 13px; }
.explorer .toolbar .nav-up { margin-left: 26px; }
.explorer .toolbar .nav-find { margin-left: 12px; }
.explorer .toolbar .nav-dirs { margin-left: 11px; }
.explorer .toolbar .nav-views { margin-left: 16px; }
.tri.dark {
  color: #5a5d60;
}

.address {
  display: flex;
  align-items: center;
  height: 24px;
  background: #f3f3f3;
  color: #55585c;
}
.address label {
  align-self: stretch;
  padding: 4px 4px 0 6px;
  background: #d6d7d9;
}
.address .ico {
  margin-left: 2px;
}
.address input {
  flex: 1;
  min-width: 0;
  padding: 0 4px;
  border: 0;
  background: none;
  font: inherit;
  font-size: 12px;
  color: #2c2c2c;
}
.address .drop {
  display: flex;
  align-items: center;
  justify-content: center;
  width: 14px;
  height: 22px;
  margin-right: 2px;
  border: 1px solid #d2d3d5;
  background: #fafafa;
}
.address .drop .tri {
  border-width: 3px;
  border-bottom: 0;
}
.address .go {
  display: flex;
  align-items: center;
  align-self: stretch;
  gap: 3px;
  padding: 0 9px 0 4px;
  background: linear-gradient(#e6e7e8, #cfd1d3);
  color: #4d5054;
}
.go span {
  display: flex;
  align-items: center;
  justify-content: center;
  width: 20px;
  height: 20px;
  border: 1px solid #8d97a6;
  border-radius: 2px;
  background: #f4f6f8;
}
.go svg {
  width: 14px;
  height: 14px;
}

.body {
  display: flex;
  background: #f3f3f3;
}

.tasks {
  flex: none;
  width: 215px;
  padding: 16px 22px 0 19px;
  background: #000;
  box-shadow: 1px 0 3px #000;
  font: 11px/13px Roboto, sans-serif;
  color: #fff;
}
.tasks h3 {
  display: flex;
  align-items: center;
  justify-content: space-between;
  font: bold 11px/16px "Open Sans", sans-serif;
}
.tasks ul {
  display: flex;
  flex-direction: column;
  gap: 4px;
  margin: 15px 0 28px;
}
.tasks li {
  display: flex;
  gap: 7px;
  min-height: 15px;
}
.tasks a {
  padding-right: 8px;
}
.tasks .places {
  margin-bottom: 23px;
}
.details {
  padding: 13px 0 0 2px;
}
.details strong {
  display: block;
  font: bold 12px/15px "Open Sans", sans-serif;
  white-space: nowrap;
}
.details p {
  margin-bottom: 5px;
  padding-right: 20px;
}

.files {
  flex: 1;
  display: grid;
  grid-template-columns: repeat(auto-fill, 75px);
  grid-auto-rows: 75px;
  align-content: start;
  padding: 5px 0 9px 5px;
}
.files button {
  display: flex;
  flex-direction: column;
  align-items: center;
  justify-content: flex-start;
  white-space: nowrap;
}
.files svg {
  flex: none;
  width: 32px;
  height: 32px;
  margin-bottom: 4px;
}

.explorer .statusbar {
  padding-top: 1px;
  background:
    repeating-linear-gradient(135deg, #b5b8bd 0 1px, #ebeef3 1px 4px) right bottom / 10px 10px no-repeat,
    #ebeef3;
}
.explorer .statusbar .count {
  flex: 1;
  padding-left: 2px;
}
.explorer .statusbar .size {
  width: 91px;
  padding-left: 4px;
  border-left: 1px solid #c5c8cd;
}
.explorer .statusbar .zone {
  display: flex;
  gap: 4px;
  width: 249px;
  padding-left: 5px;
  border-left: 1px solid #c5c8cd;
}

/* Taskbar */
.taskbar {
  display: flex;
  height: 21px;
  border-top: 1px solid #55585a;
  background: linear-gradient(#353637 0 10px, #1a1a1b 10px);
  font-family: Roboto, sans-serif;
  color: #b4bbd0;
}
.start {
  width: 47px;
  padding-right: 11px;
}
.task {
  display: flex;
  align-items: center;
  gap: 4px;
  width: 154px;
  margin-right: 6px;
  padding: 0 0 2px 11px;
  border-top: 1px solid #454749;
  background: linear-gradient(#2b2c2e, #1a1a1b);
  white-space: nowrap;
}
.task.active {
  background: #0b0b0d;
  color: #e3e8f8;
}
.tray {
  display: flex;
  align-items: center;
  gap: 2px;
  margin-left: auto;
  padding: 0 13px 2px 0;
}
.tray .tri {
  margin-right: 9px;
}
.tray time {
  margin-left: 5px;
}
```
